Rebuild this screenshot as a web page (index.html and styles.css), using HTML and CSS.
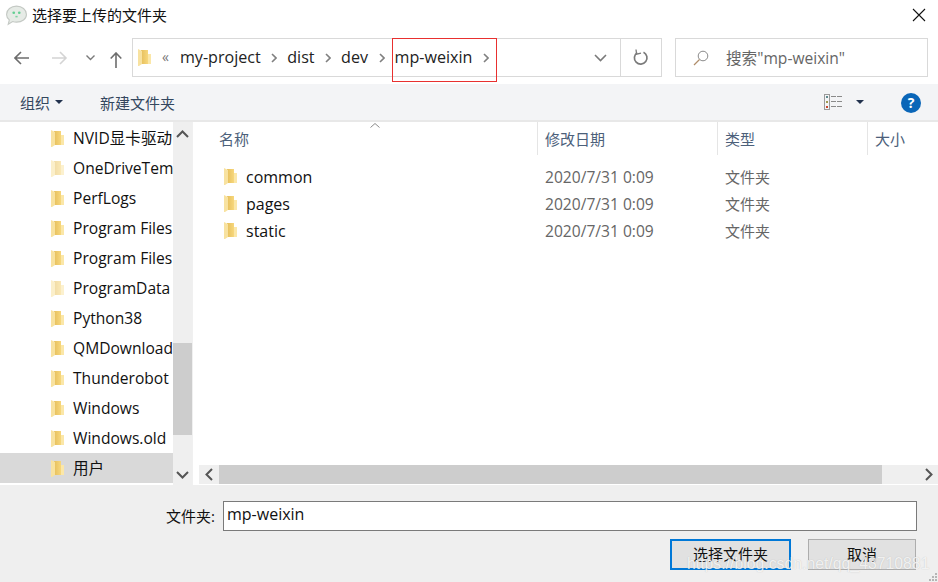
FILE: index.html
```html
<!DOCTYPE html>
<html lang="zh-CN">
<head>
  <meta charset="UTF-8">
  <title>选择要上传的文件夹</title>
  <link rel="stylesheet" href="styles.css">
</head>
<body>
  <svg class="defs" width="0" height="0">
    <defs>
      <linearGradient id="folder-back" x1="0" y1="0" x2="1" y2="0">
        <stop offset="0" stop-color="#e6bf5c"/>
        <stop offset="1" stop-color="#f7d77c"/>
      </linearGradient>
    </defs>
    <symbol id="folder" viewBox="0 0 13 17">
      <path d="M3 1 L10 1 L10 15 L3 15 Z" fill="url(#folder-back)"/>
      <path d="M10 5 L13 5 L13 15 L10 15 Z" fill="#fbe7a8"/>
      <path d="M0 0 L4 2 L4 15 L1 17 L0 17 Z" fill="#f8e2a0"/>
    </symbol>
    <symbol id="chev" viewBox="0 0 6 10">
      <path d="M1 1 L5 5 L1 9" fill="none" stroke="#808080" stroke-width="1.6"/>
    </symbol>
  </svg>

  <div class="dialog">
    <div class="titlebar">
      <svg class="app-icon" width="21" height="21" viewBox="1 2 19 18">
        <path d="M10.5 2.5 C15.5 2.5 19.5 5.8 19.5 10 C19.5 14.2 15.5 17 10.5 17 C9 17 8 16.8 7 16.5 L3 19 L4 15 C2.5 13.8 1.5 12 1.5 10 C1.5 5.8 5.5 2.5 10.5 2.5 Z" fill="#e6ebe6" stroke="#c4c9c4"/>
        <circle cx="8" cy="8.5" r="1.2" fill="#63cf92"/>
        <circle cx="13" cy="8.5" r="1.2" fill="#63cf92"/>
        <path d="M9.5 12 L11.5 12" stroke="#7fd3a2" stroke-width="1.4"/>
      </svg>
      <span class="title">选择要上传的文件夹</span>
      <svg class="close" width="14" height="14" viewBox="0 0 14 14">
        <path d="M1 1 L13 13 M13 1 L1 13" stroke="#111" stroke-width="1.1"/>
      </svg>
    </div>

    <div class="navbar">
      <svg class="nav-btn back" width="16" height="14" viewBox="0 0 16 14">
        <path d="M1 7 L15 7 M7 1 L1 7 L7 13" fill="none" stroke="#6d6d6d" stroke-width="1.6"/>
      </svg>
      <svg class="nav-btn forward" width="16" height="14" viewBox="0 0 16 14">
        <path d="M0 7 L14 7 M8 1 L14 7 L8 13" fill="none" stroke="#d4d4d4" stroke-width="1.6"/>
      </svg>
      <svg class="nav-btn recent" width="9" height="6" viewBox="0 0 9 6">
        <path d="M0.5 0.5 L4.5 4.5 L8.5 0.5" fill="none" stroke="#7a7a7a" stroke-width="1.4"/>
      </svg>
      <svg class="nav-btn up" width="12" height="16" viewBox="0 0 12 16">
        <path d="M6 16 L6 1 M0.7 6.5 L6 1 L11.3 6.5" fill="none" stroke="#6d6d6d" stroke-width="1.6"/>
      </svg>

      <div class="address">
        <svg class="addr-folder" width="13" height="17"><use href="#folder"/></svg>
        <span class="crumb-more">«</span>
        <span class="crumb">my-project</span>
        <svg class="chev" width="6" height="10"><use href="#chev"/></svg>
        <span class="crumb">dist</span>
        <svg class="chev" width="6" height="10"><use href="#chev"/></svg>
        <span class="crumb">dev</span>
        <svg class="chev" width="6" height="10"><use href="#chev"/></svg>
        <span class="crumb">mp-weixin</span>
        <svg class="chev" width="6" height="10"><use href="#chev"/></svg>
        <svg class="addr-drop" width="13" height="8" viewBox="0 0 13 8">
          <path d="M1 1 L6.5 6.5 L12 1" fill="none" stroke="#7a7a7a" stroke-width="1.6"/>
        </svg>
        <div class="refresh">
          <svg width="16" height="17" viewBox="0 0 16 17">
            <path d="M10.5 3.2 A6.3 6.3 0 1 1 4.2 3.6" fill="none" stroke="#7a7a7a" stroke-width="1.7"/>
            <path d="M3 0.5 L3.6 5.2 L8 4.2" fill="none" stroke="#7a7a7a" stroke-width="1.3"/>
          </svg>
        </div>
      </div>

      <div class="search">
        <svg width="16" height="16" viewBox="0 0 16 16">
          <circle cx="10" cy="6" r="4.8" fill="none" stroke="#8a8a8a"/>
          <path d="M6.5 9.5 L1 15" stroke="#b08d6a" stroke-width="1.2"/>
        </svg>
        <span class="search-text">搜索"mp-weixin"</span>
      </div>
    </div>

    <div class="toolbar">
      <span class="tool organize">组织</span>
      <span class="caret"></span>
      <span class="tool new-folder">新建文件夹</span>
      <svg class="view-icon" width="19" height="16" viewBox="0 0 19 16">
        <rect x="0.5" y="0.5" width="5" height="15" fill="#f3f4f6" stroke="#9a9a9a"/>
        <rect x="2" y="2" width="2" height="2" fill="#5f8a8f"/>
        <rect x="2" y="7" width="2" height="2" fill="#a09a50"/>
        <rect x="2" y="12" width="2" height="2" fill="#c8462e"/>
        <path d="M7 2.5 H18 M7 7.5 H18 M7 12.5 H18" stroke="#8a8a8a" stroke-dasharray="5 1"/>
      </svg>
      <span class="caret view-caret"></span>
      <span class="help">?</span>
    </div>

    <div class="browser">
      <div class="tree">
        <div class="tree-list">
          <div class="tree-item"><svg class="folder" width="13" height="17"><use href="#folder"/></svg><span class="label">NVID显卡驱动</span></div>
          <div class="tree-item faded"><svg class="folder" width="13" height="17"><use href="#folder"/></svg><span class="label">OneDriveTem</span></div>
          <div class="tree-item"><svg class="folder" width="13" height="17"><use href="#folder"/></svg><span class="label">PerfLogs</span></div>
          <div class="tree-item"><svg class="folder" width="13" height="17"><use href="#folder"/></svg><span class="label">Program Files</span></div>
          <div class="tree-item"><svg class="folder" width="13" height="17"><use href="#folder"/></svg><span class="label">Program Files</span></div>
          <div class="tree-item faded"><svg class="folder" width="13" height="17"><use href="#folder"/></svg><span class="label">ProgramData</span></div>
          <div class="tree-item"><svg class="folder" width="13" height="17"><use href="#folder"/></svg><span class="label">Python38</span></div>
          <div class="tree-item"><svg class="folder" width="13" height="17"><use href="#folder"/></svg><span class="label">QMDownload</span></div>
          <div class="tree-item"><svg class="folder" width="13" height="17"><use href="#folder"/></svg><span class="label">Thunderobot</span></div>
          <div class="tree-item"><svg class="folder" width="13" height="17"><use href="#folder"/></svg><span class="label">Windows</span></div>
          <div class="tree-item"><svg class="folder" width="13" height="17"><use href="#folder"/></svg><span class="label">Windows.old</span></div>
          <div class="tree-item selected"><svg class="folder" width="13" height="17"><use href="#folder"/></svg><span class="label">用户</span></div>
        </div>
        <div class="vscroll">
          <svg class="arrow-up" width="13" height="8" viewBox="0 0 13 8"><path d="M1 7 L6.5 1.5 L12 7" fill="none" stroke="#555" stroke-width="2"/></svg>
          <div class="vthumb"></div>
          <svg class="arrow-down" width="13" height="8" viewBox="0 0 13 8"><path d="M1 1 L6.5 6.5 L12 1" fill="none" stroke="#555" stroke-width="2"/></svg>
        </div>
      </div>

      <div class="files">
        <div class="file-head">
          <svg class="sort" width="10" height="5" viewBox="0 0 10 5"><path d="M0.5 4.5 L5 0.5 L9.5 4.5" fill="none" stroke="#8a8a8a"/></svg>
          <div class="col col-name">名称</div>
          <div class="col col-date">修改日期</div>
          <div class="col col-type">类型</div>
          <div class="col col-size">大小</div>
        </div>
        <div class="file-rows">
          <div class="file-row">
            <div class="cell-name"><svg class="folder" width="13" height="17"><use href="#folder"/></svg><span>common</span></div>
            <div class="cell-date">2020/7/31 0:09</div>
            <div class="cell-type">文件夹</div>
          </div>
          <div class="file-row">
            <div class="cell-name"><svg class="folder" width="13" height="17"><use href="#folder"/></svg><span>pages</span></div>
            <div class="cell-date">2020/7/31 0:09</div>
            <div class="cell-type">文件夹</div>
          </div>
          <div class="file-row">
            <div class="cell-name"><svg class="folder" width="13" height="17"><use href="#folder"/></svg><span>static</span></div>
            <div class="cell-date">2020/7/31 0:09</div>
            <div class="cell-type">文件夹</div>
          </div>
        </div>
        <div class="hscroll">
          <svg width="8" height="13" viewBox="0 0 8 13"><path d="M7 1 L1.5 6.5 L7 12" fill="none" stroke="#555" stroke-width="2"/></svg>
          <div class="hthumb"></div>
          <svg class="arrow-right" width="8" height="13" viewBox="0 0 8 13"><path d="M1 1 L6.5 6.5 L1 12" fill="none" stroke="#555" stroke-width="2"/></svg>
        </div>
      </div>
    </div>

    <div class="footer">
      <div class="field">
        <span class="field-label">文件夹:</span>
        <div class="field-input">mp-weixin</div>
      </div>
      <div class="actions">
        <button class="btn primary">选择文件夹</button>
        <button class="btn">取消</button>
      </div>
    </div>

    <!-- annotation and watermark sit on top of the screenshot -->
    <div class="red-box"></div>
    <div class="watermark">https://blog.csdn.net/qq_43710881</div>
    <svg class="grip" width="10" height="10" viewBox="0 0 10 10">
      <path d="M7 1 h2 v2 h-2 z M4 4 h2 v2 h-2 z M7 4 h2 v2 h-2 z M1 7 h2 v2 h-2 z M4 7 h2 v2 h-2 z M7 7 h2 v2 h-2 z" fill="#b5b5b5"/>
    </svg>
  </div>
</body>
</html>
```

FILE: styles.css
```css
* {
  box-sizing: border-box;
}

html, body {
  margin: 0;
  padding: 0;
}

body {
  background: white;
  font-family: "Open Sans", "Noto Sans CJK SC", sans-serif;
  font-size: 15px;
  color: #1a1a1a;
}

.defs {
  position: absolute;
}

svg {
  display: block;
  flex: none;
}

.dialog {
  position: relative;
  width: 938px;
  height: 582px;
  overflow: hidden;
  display: flex;
  flex-direction: column;
}

/* Title bar */
.titlebar {
  height: 30px;
  display: flex;
  align-items: center;
  padding-left: 6px;
}

.title {
  margin-left: 5px;
  margin-top: -1px;
  font-size: 15px;
  color: #111;
}

.close {
  margin-left: auto;
  margin-right: 12px;
}

/* Navigation row */
.navbar {
  height: 54px;
  display: flex;
  align-items: flex-start;
  position: relative;
  padding-top: 8px;
}

.nav-btn {
  margin-top: 13px;
}

.back {
  margin-left: 14px;
}

.forward {
  margin-left: 22px;
}

.recent {
  margin-left: 18px;
  margin-top: 17px;
}

.up {
  margin-left: 15px;
  margin-top: 14px;
}

.address {
  margin-left: 10px;
  width: 530px;
  height: 39px;
  border: 1px solid #d9d9d9;
  display: flex;
  align-items: center;
  padding-left: 5px;
}

.addr-folder {
  margin-right: 11px;
}

.crumb-more {
  font-size: 14px;
  color: #777;
  margin-right: 11px;
  margin-top: -3px;
}

.crumb {
  font-size: 16.1px;
  color: #222;
  margin-top: -1px;
}

.chev {
  margin: 0 10px 0 10.5px;
}

.addr-drop {
  margin-left: auto;
  margin-right: 13px;
}

.refresh {
  width: 41px;
  height: 37px;
  border-left: 1px solid #d9d9d9;
  display: flex;
  align-items: center;
  justify-content: center;
}

.search {
  margin-left: 13px;
  width: 253px;
  height: 39px;
  border: 1px solid #d9d9d9;
  display: flex;
  align-items: center;
  padding-left: 17px;
}

.search-text {
  margin-left: 17px;
  font-size: 15.6px;
  color: #666;
}

/* Toolbar */
.toolbar {
  height: 38px;
  background: #f3f4f6;
  border-bottom: 2px solid #e8e8e8;
  display: flex;
  align-items: center;
  padding-left: 20px;
  color: #33475e;
}

.tool {
  font-size: 15px;
}

.caret {
  width: 0;
  height: 0;
  margin-left: 5px;
  border-left: 4px solid transparent;
  border-right: 4px solid transparent;
  border-top: 4px solid #22324e;
}

.new-folder {
  margin-left: 37px;
}

.view-icon {
  margin-left: auto;
}

.view-caret {
  margin-left: 13px;
  margin-right: 74px;
}

.help {
  position: absolute;
  left: 901px;
  top: 93px;
  width: 20px;
  height: 20px;
  border-radius: 50%;
  background: #0a66b8;
  color: white;
  font-weight: bold;
  font-size: 14px;
  line-height: 20px;
  text-align: center;
}

/* Main area */
.browser {
  height: 363px;
  display: flex;
}

.tree {
  width: 193px;
  display: flex;
  border-right: 1px solid #f0f0f0;
}

.tree-list {
  width: 173px;
  padding-top: 1px;
  overflow: hidden;
}

.tree-item {
  height: 30px;
  display: flex;
  align-items: center;
  padding-left: 51px;
  white-space: nowrap;
}

.tree-item .folder {
  margin-right: 9px;
}

.tree-item.faded .folder {
  opacity: 0.55;
}

.tree-item.selected {
  background: #d9d9d9;
}

.label {
  font-size: 15.6px;
  line-height: 20px;
  margin-top: -1px;
  color: #111;
}

.vscroll {
  width: 19px;
  background: #efefef;
  position: relative;
  display: flex;
  flex-direction: column;
  align-items: center;
  padding: 8px 0 6px;
}

.vthumb {
  position: absolute;
  left: 0;
  top: 221px;
  width: 19px;
  height: 92px;
  background: #cdcdcd;
}

.arrow-down {
  margin-top: auto;
}

.files {
  flex: 1;
  display: flex;
  flex-direction: column;
  min-width: 0;
}

.file-head {
  height: 33px;
  display: flex;
  position: relative;
  flex: none;
}

.sort {
  position: absolute;
  left: 177px;
  top: 1px;
}

.col {
  height: 33px;
  line-height: 34px;
  font-size: 15px;
  color: #4c607a;
  padding-left: 7px;
  border-right: 1px solid #e5e5e5;
}

.col-name {
  width: 345px;
  padding-left: 26px;
}

.col-date {
  width: 180px;
}

.col-type {
  width: 150px;
}

.col-size {
  border-right: none;
}

.file-rows {
  flex: 1;
  padding-top: 8px;
}

.file-row {
  height: 27px;
  display: flex;
  align-items: center;
}

.cell-name {
  width: 352px;
  padding-left: 31px;
  display: flex;
  align-items: center;
  font-size: 16px;
  color: #111;
}

.cell-name .folder {
  margin-right: 9px;
}

.cell-date {
  width: 180px;
  font-size: 15.6px;
  color: #666;
}

.cell-type {
  font-size: 15px;
  color: #666;
}

.hscroll {
  height: 19px;
  margin-left: 6px;
  margin-bottom: 1px;
  background: #efefef;
  display: flex;
  align-items: center;
  padding-left: 6px;
  flex: none;
}

.hthumb {
  width: 663px;
  height: 19px;
  margin-left: 6px;
  background: #cdcdcd;
}

.arrow-right {
  margin-left: auto;
  margin-right: 5px;
}

/* Footer */
.footer {
  flex: 1;
  background: #efefef;
  padding-top: 16px;
}

.field {
  display: flex;
  align-items: center;
  height: 30px;
  padding-left: 166px;
}

.field-label {
  width: 57px;
  font-size: 15px;
  margin-top: -1px;
  color: #111;
}

.field-input {
  width: 694px;
  height: 30px;
  background: white;
  border: 1px solid #7a7a7a;
  padding-left: 3px;
  line-height: 25px;
  font-size: 16px;
  color: #111;
}

.actions {
  display: flex;
  margin-top: 8px;
  padding-left: 670px;
  gap: 17px;
}

.btn {
  width: 108px;
  height: 31px;
  background: #e1e1e1;
  border: 1px solid #adadad;
  font-family: inherit;
  font-size: 15px;
  color: #111;
  padding: 0 0 2px;
}

.btn.primary {
  width: 121px;
  border: 2px solid #0078d7;
}

/* Overlays */
.red-box {
  position: absolute;
  left: 392px;
  top: 38px;
  width: 105px;
  height: 44px;
  border: 1px solid #e8302f;
}

.watermark {
  position: absolute;
  left: 687px;
  top: 555px;
  font-family: "Liberation Sans", sans-serif;
  font-size: 15.8px;
  white-space: nowrap;
  color: rgba(255, 255, 255, 0.8);
  text-shadow: 0 0 1px rgba(130, 130, 130, 0.45);
}

.grip {
  position: absolute;
  right: 0;
  bottom: 0;
}
```
